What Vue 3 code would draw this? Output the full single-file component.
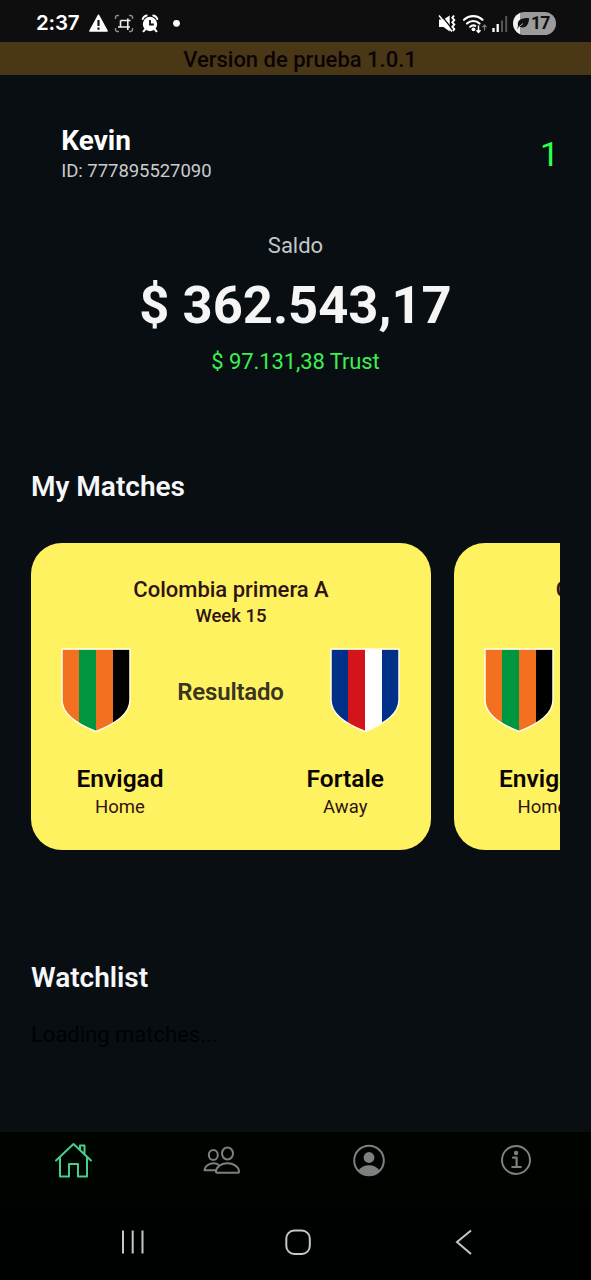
<script setup>
const orange = '#f37021'
const green = '#009640'
const blue = '#003087'
const homeTeam = { name: 'Envigad', stripes: [orange, green, orange, '#000000'] }
const awayTeam = { name: 'Fortale', stripes: [blue, '#d4141c', '#ffffff', blue] }
const matches = [
  { id: 1, league: 'Colombia primera A', week: 'Week 15', teams: [homeTeam, awayTeam] },
  { id: 2, league: 'Colombia primera A', week: 'Week 15', teams: [homeTeam, awayTeam] },
]
</script>

<template>
  <div class="app">
    <header class="status">
      <span class="time">2:37</span>
      <svg class="status-left" width="100" height="24" viewBox="0 0 100 24">
        <path d="M10.500 4.200 19.200 20H1.800Z" fill="#fff" stroke="#fff" stroke-width="1.400" stroke-linejoin="round" />
        <path d="M10.500 9v6M10.500 16.500v2.300" stroke="#0e0e0e" stroke-width="2.100" />
        <g fill="none" stroke="#8b8b8b" stroke-width="1.400">
          <path d="M27.500 8V6.500a2 2 0 0 1 2-2H31M41 4.500h1.500a2 2 0 0 1 2 2V8M44.500 17v1.500a2 2 0 0 1-2 2H41M31 20.500h-1.500a2 2 0 0 1-2-2V17" />
        </g>
        <path d="M32.500 9.500V16H42M30 16h2.500M32.500 9.500h7.300V19M39.800 9.500V7.500M39.800 9.500h2.700" fill="none" stroke="#eee" stroke-width="1.600" />
        <circle cx="62" cy="13" r="7.200" fill="#fff" />
        <path d="M54.700 8a5 5 0 0 1 4-3.600M69.300 8a5 5 0 0 0-4-3.600M57.500 18l-2 2.300M66.500 18l2 2.300" stroke="#fff" stroke-width="2" stroke-linecap="round" fill="none" />
        <path d="M62 9v4.500h3.800" fill="none" stroke="#0e0e0e" stroke-width="1.800" />
        <circle cx="88.500" cy="12.300" r="3.400" fill="#fff" />
      </svg>
      <svg class="status-right" width="72" height="24" viewBox="0 0 72 24">
        <path d="M1 8.500h4.500L11.700 4.500v16L5.500 16H1Z" fill="#fff" />
        <path d="M2.500 3.500 15 19" stroke="#0e0e0e" stroke-width="1.200" />
        <path d="M1 4.500 14 20.500" stroke="#fff" stroke-width="1.600" />
        <path d="m16 4.500-1.700 2.300 2 2.200-2 2.300 2 2.300-2 2.200 2 2.300-1.300 2" fill="none" stroke="#fff" stroke-width="1.900" />
        <g fill="none" stroke="#fff" stroke-width="2.200" stroke-linecap="round">
          <path d="M26 8.800a13.500 13.500 0 0 1 18.500 0M29 12.500a9 9 0 0 1 12.500 0M32.200 15.800a5 5 0 0 1 5-1" />
        </g>
        <circle cx="35.500" cy="18.300" r="1.900" fill="#fff" />
        <path d="M40.500 14.500v7m-2-2.200 2 2.200 2-2.200" fill="none" stroke="#fff" stroke-width="1.500" />
        <path d="M46.500 19.500V14m-2 2.200 2-2.200 2 2.200" fill="none" stroke="#777" stroke-width="1.300" />
        <path d="M55.500 17v4" stroke="#fff" stroke-width="2.300" />
        <path d="M59.700 13v8" stroke="#fff" stroke-width="2.300" />
        <path d="M64 9.500V21M68.200 5v16" stroke="#555" stroke-width="2" />
      </svg>
      <div class="battery">
        <svg width="14" height="14" viewBox="0 0 14 14">
          <path d="M2 10C1 4.500 4 2 13 2 13 9 9.500 13 3.500 10.800L1 13" fill="#111" />
          <path d="M.8 12.500 7 7.500" stroke="#aaa" stroke-width="1" />
        </svg>
        <span>17</span>
      </div>
    </header>

    <div class="banner">Version de prueba 1.0.1</div>

    <main>
      <section class="profile">
        <div>
          <h1>Kevin</h1>
          <p class="user-id">ID: 777895527090</p>
        </div>
        <span class="count">1</span>
      </section>

      <section class="balance">
        <p class="label">Saldo</p>
        <p class="amount">$ 362.543,17</p>
        <p class="trust">$ 97.131,38 Trust</p>
      </section>

      <section class="matches">
        <h2>My Matches</h2>
        <div class="carousel">
          <article v-for="match in matches" :key="match.id" class="card">
            <h3>{{ match.league }}</h3>
            <p class="week">{{ match.week }}</p>
            <div class="versus">
              <template v-for="(team, t) in match.teams" :key="team.name">
                <span v-if="t === 1" class="result">Resultado</span>
                <svg class="shield" width="70" height="85" viewBox="0 0 70 85">
                  <clipPath :id="`shield-${match.id}-${t}`">
                    <path d="M1 1.500H69V52C69 66 53 76.500 35 83.500 17 76.500 1 66 1 52Z" />
                  </clipPath>
                  <g :clip-path="`url(#shield-${match.id}-${t})`">
                    <rect v-for="(color, i) in team.stripes" :key="i" :x="1 + i * 17" y="1" width="17" height="84" :fill="color" />
                  </g>
                  <path d="M1 1H69V52C69 66 53 76.500 35 83.500 17 76.500 1 66 1 52Z" fill="none" stroke="#fffde8" stroke-width="1.500" />
                </svg>
              </template>
            </div>
            <div class="teams">
              <div v-for="(team, t) in match.teams" :key="team.name">
                <p class="team">{{ team.name }}</p>
                <p class="side">{{ t ? 'Away' : 'Home' }}</p>
              </div>
            </div>
          </article>
        </div>
      </section>

      <section class="watchlist">
        <h2>Watchlist</h2>
        <p class="loading">Loading matches...</p>
      </section>
    </main>

    <nav class="tabs">
      <svg class="active" width="40" height="40" viewBox="0 0 40 40">
        <path d="M2 20.500 19.500 4 37 20.500M6 18v18.500h9V24h9v12.500h9V18M26 9.500V5.500h4.500v9" />
      </svg>
      <svg width="40" height="40" viewBox="0 0 40 40">
        <ellipse cx="12.300" cy="15" rx="4.500" ry="5" />
        <ellipse cx="26.500" cy="13.500" rx="5.500" ry="6" />
        <path d="M17 24.300c-5.500-2.300-12.700 0-13.500 6H14M15 31.500c.8-11 22.200-11 23 0 .1.900-.3 1.300-1 1.300H16c-.7 0-1.100-.4-1-1.300Z" />
      </svg>
      <svg width="40" height="40" viewBox="0 0 40 40">
        <circle cx="21" cy="20.500" r="14.800" />
        <circle cx="21" cy="17.500" r="5.400" class="fill" />
        <path class="fill" d="M10.500 30.500c4.500-7 16.500-7 21 0a14.700 14.700 0 0 1-21 0Z" />
      </svg>
      <svg width="40" height="40" viewBox="0 0 40 40">
        <circle cx="21" cy="20" r="14" />
        <circle cx="21.100" cy="13" r="2.200" class="fill" />
        <path d="M18.100 17.700h3.500v9M17.300 27h8.500" stroke-width="2.200" />
      </svg>
    </nav>

    <footer class="system">
      <svg width="28" height="28" viewBox="0 0 28 28"><path d="M4 2.500v23M13.700 2.500v23M23.500 2.500v23" /></svg>
      <svg width="28" height="28" viewBox="0 0 28 28"><rect x="2.300" y="2.500" width="23.500" height="23.500" rx="8" /></svg>
      <svg width="28" height="28" viewBox="0 0 28 28"><path d="M22 2.500 8 14l14 12" /></svg>
    </footer>
  </div>
</template>

<style>
body {
  background: #090e12;
}
</style>

<style scoped>
.app {
  display: flex;
  flex-direction: column;
  width: 591px;
  height: 1280px;
  overflow: hidden;
  background: #090e12;
  font-family: Roboto, "Liberation Sans", sans-serif;
}
h1, h2, h3, p {
  margin: 0;
}
.status {
  display: flex;
  align-items: center;
  box-sizing: border-box;
  height: 42px;
  padding: 4px 35px 0 36px;
  background: #0e0e0e;
  color: #fff;
}
.time {
  width: 52px;
  font: 600 20.500px/24px Inter, sans-serif;
  letter-spacing: -0.2px;
}
.status-right {
  margin-left: auto;
}
.battery {
  display: flex;
  align-items: center;
  gap: 1px;
  box-sizing: border-box;
  width: 43px;
  height: 23px;
  margin-left: 3px;
  padding-left: 3px;
  border-radius: 12px;
  background: linear-gradient(90deg, #f2f2f2 7px, #9b9b9b 7px);
  color: #111;
  font: 700 17.500px/23px Roboto, sans-serif;
  letter-spacing: -0.8px;
}
.banner {
  height: 33px;
  background: #493715;
  color: #090507;
  text-align: center;
  font-size: 22px;
  font-weight: 500;
  line-height: 36px;
  text-indent: 9px;
}
main {
  flex: 1;
  padding: 49px 31px 0;
}
.profile {
  display: flex;
  align-items: center;
  justify-content: space-between;
  height: 60px;
  padding: 0 1px 0 30.300px;
}
h1 {
  font-size: 28px;
  font-weight: 700;
  line-height: 34px;
  color: #fff;
}
.user-id {
  font-size: 18.500px;
  line-height: 27px;
  letter-spacing: -0.05px;
  color: #c9cbcd;
}
.count {
  font-size: 34px;
  color: #2fff4d;
}
.balance {
  margin-top: 49px;
  text-align: center;
}
.label {
  font-size: 22px;
  line-height: 26px;
  color: #c3c6c8;
}
.amount {
  margin: 15px 0 12.500px;
  font-size: 52.500px;
  font-weight: 700;
  line-height: 62px;
  color: #f5f5f5;
}
.trust {
  font-size: 22px;
  line-height: 26px;
  letter-spacing: -0.1px;
  color: #3bef52;
}
.matches {
  margin-top: 95px;
}
h2 {
  font-size: 28px;
  font-weight: 600;
  line-height: 34px;
  color: #f5f7fa;
}
.carousel {
  display: flex;
  gap: 22.500px;
  width: 529px;
  margin-top: 39px;
  overflow: hidden;
}
.card {
  flex: 0 0 400px;
  box-sizing: border-box;
  height: 307px;
  padding-top: 34px;
  border-radius: 31px;
  background: #fff260;
  text-align: center;
  color: #2e1414;
}
h3 {
  font-size: 22px;
  font-weight: 500;
  line-height: 26px;
}
.week {
  margin-top: 2.500px;
  font-size: 18.500px;
  font-weight: 500;
  line-height: 22px;
}
.versus {
  display: flex;
  align-items: center;
  justify-content: space-between;
  margin-top: 20.500px;
  padding: 0 31px 0 30px;
}
.shield {
  display: block;
}
.result {
  padding-top: 3px;
  font-size: 24px;
  font-weight: 600;
  letter-spacing: -0.2px;
  color: #3a3422;
}
.teams {
  display: flex;
  justify-content: space-between;
  margin-top: 32px;
  padding: 0 47px 0 45.500px;
}
.team {
  font-size: 24.500px;
  font-weight: 600;
  line-height: 28px;
  color: #0b0404;
}
.side {
  margin-top: 3.500px;
  font-size: 18.500px;
  line-height: 22px;
}
.watchlist {
  margin-top: 111px;
}
.loading {
  margin-top: 27px;
  font-size: 22px;
  line-height: 26px;
  color: #000207;
}
.tabs {
  display: flex;
  justify-content: space-around;
  height: 64px;
  padding: 8px 2px 0 0;
  background: #000401;
}
.tabs svg {
  fill: none;
  stroke: #7f7f7f;
  stroke-width: 2;
  stroke-linejoin: round;
  stroke-linecap: round;
}
.tabs .active {
  stroke: #46cf8b;
}
.tabs .fill {
  fill: #7f7f7f;
  stroke: none;
}
.system {
  display: flex;
  align-items: center;
  justify-content: space-between;
  box-sizing: border-box;
  height: 76px;
  padding: 0 114px 0 119px;
  background: #000202;
}
.system svg {
  fill: none;
  stroke: #c6c6c6;
  stroke-width: 2;
}
</style>
